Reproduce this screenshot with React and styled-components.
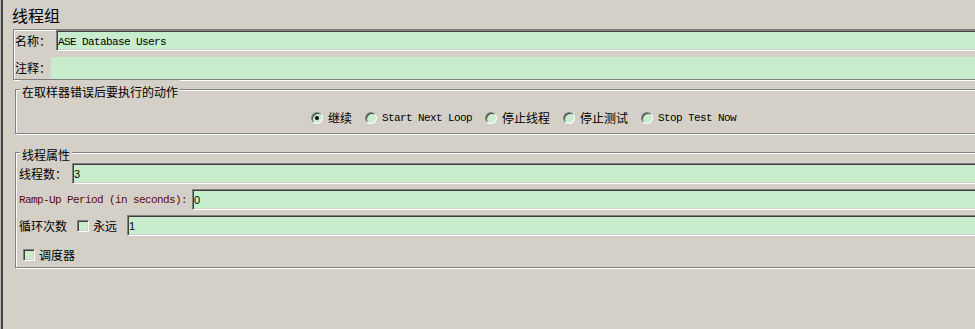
import React from "react";
import styled, {createGlobalStyle} from "styled-components";

const FACE = "#d4d0c8";
const GREEN = "#c7edcc";
const CJK = `"Noto Sans CJK SC", "Noto Sans", sans-serif`;
const MONO = `"Liberation Mono", "DejaVu Sans Mono", monospace`;

const GlobalStyle = createGlobalStyle`
  html, body {
    margin: 0;
    padding: 0;
    background: ${FACE};
    overflow: hidden;
  }

  body {
    font-family: ${CJK};
    font-size: 12px;
    color: #000;
  }
`;

const Window = styled.div`
  width: 975px;
  height: 329px;
  overflow: hidden;
  box-sizing: border-box;
  border-left: 1px solid #b4b4b4;
`;

const Pane = styled.div`
  height: 100%;
  box-sizing: border-box;
  border-left: 2px solid #454545;
  padding-left: 10px;
  display: flex;
  flex-direction: column;
  align-items: flex-start;
`;

const Title = styled.div`
  margin: 4px 0 3px -1px;
  font-size: 16px;
  line-height: 22px;
  height: 22px;
`;

const etched = `
  border: 1px solid #808080;
  box-shadow: 1px 1px 0 #fff, inset 1px 1px 0 #fff;
`;

const NamePanel = styled.div`
  width: 1000px;
  box-sizing: border-box;
  ${etched};
  padding-left: 1px;
  display: flex;
  flex-direction: column;
  gap: 6px;
`;

const Row = styled.div`
  display: flex;
  align-items: center;
  height: ${({h}) => h || 21}px;
`;

const Label = styled.span`
  flex: none;
  width: ${({w}) => w ? `${w}px` : 'auto'};
  margin-right: ${({gap}) => gap ?? 5}px;
  font-family: ${({mono}) => mono ? MONO : CJK};
  font-size: ${({mono}) => mono ? '11px' : '12px'};
  letter-spacing: ${({mono}) => mono ? '-0.6px' : '0'};
  color: ${({tone}) => tone || '#000'};
  line-height: 16px;
  white-space: nowrap;
`;

const TextField = styled.div`
  flex: 1;
  align-self: stretch;
  box-sizing: border-box;
  border: 1px solid;
  border-color: #808080 #fff #fff #808080;
  box-shadow: inset 1px 1px 0 #404040, inset -1px -1px 0 ${FACE};
  background: ${GREEN};
  display: flex;
  align-items: center;
  padding: ${({mono}) => mono ? '2px 0 0 1px' : '0 0 0 1px'};
  font-family: ${({mono}) => mono ? MONO : `"Liberation Sans", Arial, sans-serif`};
  font-size: 11px;
  letter-spacing: ${({mono}) => mono ? '-0.6px' : '0'};
  color: #000;
  white-space: nowrap;
`;

const CommentArea = styled.div`
  flex: 1;
  align-self: stretch;
  background: ${GREEN};
`;

const Group = styled.fieldset`
  margin: ${({top}) => top}px 0 0 2px;
  padding: 0;
  width: 1000px;
  min-width: 0;
  box-sizing: border-box;
  ${etched};
`;

const Caption = styled.legend`
  margin-left: 4px;
  padding: 5px 2px 0;
  font-size: 12px;
  line-height: 14px;
  background: ${FACE};
`;

const RadioRow = styled.div`
  display: flex;
  align-items: center;
  height: 16px;
  padding: 11px 0 7px 295px;
`;

const RadioItem = styled.label`
  display: flex;
  align-items: center;
  gap: 5px;
  margin-right: 13px;
`;

const RadioDot = styled.span`
  position: relative;
  flex: none;
  width: 12px;
  height: 12px;
  box-sizing: border-box;
  border-radius: 50%;
  border: 1px solid;
  border-color: #808080 #fff #fff #808080;
  box-shadow: inset 1px 1px 0 #404040;
  background: ${GREEN};

  &::after {
    content: "";
    display: ${({on}) => on ? 'block' : 'none'};
    position: absolute;
    left: 3px;
    top: 3px;
    width: 4px;
    height: 4px;
    border-radius: 50%;
    background: #000;
  }
`;

const PropList = styled.div`
  display: flex;
  flex-direction: column;
  gap: 5px;
  padding: 1px 0 4px 3px;
`;

const CheckBox = styled.span`
  flex: none;
  width: 12px;
  height: 12px;
  box-sizing: border-box;
  margin-right: 4px;
  border: 1px solid;
  border-color: #808080 #fff #fff #808080;
  box-shadow: inset 1px 1px 0 #404040, inset -1px -1px 0 ${FACE};
  background: ${GREEN};
`;

const SchedulerRow = styled.div`
  display: flex;
  align-items: center;
  height: 16px;
  margin: 6px 0 0 4px;
`;

const actions = [
    {text: "继续", on: true},
    {text: "Start Next Loop", mono: true},
    {text: "停止线程"},
    {text: "停止测试"},
    {text: "Stop Test Now", mono: true},
];

const App = () => {
    return (
        <>
            <GlobalStyle/>
            <Window>
                <Pane>
                    <Title>线程组</Title>
                    <NamePanel>
                        <Row>
                            <Label w={36}>名称：</Label>
                            <TextField mono>ASE Database Users</TextField>
                        </Row>
                        <Row h={22}>
                            <Label w={36} gap={0}>注释：</Label>
                            <CommentArea/>
                        </Row>
                    </NamePanel>

                    <Group top={0}>
                        <Caption>在取样器错误后要执行的动作</Caption>
                        <RadioRow>
                            {actions.map((a) => (
                                <RadioItem key={a.text}>
                                    <RadioDot on={a.on}/>
                                    <Label gap={0} mono={a.mono}>{a.text}</Label>
                                </RadioItem>
                            ))}
                        </RadioRow>
                    </Group>

                    <Group top={9}>
                        <Caption>线程属性</Caption>
                        <PropList>
                            <Row>
                                <Label w={48}>线程数：</Label>
                                <TextField>3</TextField>
                            </Row>
                            <Row>
                                <Label w={168} mono tone="#5c0a0a">Ramp-Up Period (in seconds):</Label>
                                <TextField>0</TextField>
                            </Row>
                            <Row>
                                <Label w={48} gap={10}>循环次数</Label>
                                <CheckBox/>
                                <Label w={24} gap={10}>永远</Label>
                                <TextField>1</TextField>
                            </Row>
                            <SchedulerRow>
                                <CheckBox/>
                                <Label gap={0}>调度器</Label>
                            </SchedulerRow>
                        </PropList>
                    </Group>
                </Pane>
            </Window>
        </>
    );
};

export default App;
